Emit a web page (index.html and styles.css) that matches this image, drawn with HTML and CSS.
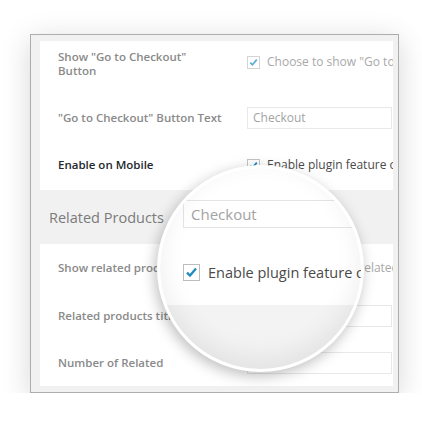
FILE: index.html
```html
<!DOCTYPE html>
<html lang="en">
<head>
<meta charset="utf-8">
<title>Settings</title>
<link rel="stylesheet" href="styles.css">
</head>
<body>
<div class="frame">
  <div class="panel">
    <section class="card card1">
      <div class="row r1">
        <div class="label">Show "Go to Checkout"<br>Button</div>
        <div class="field">
          <svg class="cb" width="13" height="13" viewBox="0 0 13 13"><rect x="0.5" y="0.5" width="12" height="12" fill="#fff" stroke="#d4d4d4"/><path d="M3.2 6.6 L5.4 8.8 L9.8 3.6" fill="none" stroke="#5aaed6" stroke-width="1.7"/></svg>
          <span class="ftext muted">Choose to show "Go to Checkout" button</span>
        </div>
      </div>
      <div class="row r2">
        <div class="label">"Go to Checkout" Button Text</div>
        <div class="field"><div class="input">Checkout</div></div>
      </div>
      <div class="row r3">
        <div class="label dark">Enable on Mobile</div>
        <div class="field">
          <svg class="cb" width="13" height="13" viewBox="0 0 13 13"><rect x="0.5" y="0.5" width="12" height="12" fill="#fff" stroke="#c4c4c4"/><path d="M3.2 6.6 L5.4 8.8 L9.8 3.6" fill="none" stroke="#1e8cbe" stroke-width="1.8"/></svg>
          <span class="ftext dark">Enable plugin feature on mobile</span>
        </div>
      </div>
    </section>
    <div class="heading">Related Products</div>
    <section class="card card2">
      <div class="row s1">
        <div class="label">Show related products</div>
        <div class="field">
          <svg class="cb" width="13" height="13" viewBox="0 0 13 13"><rect x="0.5" y="0.5" width="12" height="12" fill="#fff" stroke="#d4d4d4"/></svg>
          <span class="ftext muted">Choose to show related</span>
        </div>
      </div>
      <div class="row s2">
        <div class="label">Related products title</div>
        <div class="field"><div class="input"></div></div>
      </div>
      <div class="row s3">
        <div class="label">Number of Related</div>
        <div class="field"><div class="input"></div></div>
      </div>
    </section>
  </div>
  <div class="lens">
    <div class="lens-view">
      <div class="lens-input">Checkout</div>
      <div class="lens-check">
        <svg width="17" height="17" viewBox="0 0 17 17"><rect x="0.5" y="0.5" width="16" height="16" fill="#fff" stroke="#bdbdbd"/><path d="M4 8.6 L7 11.6 L13 4.6" fill="none" stroke="#1e8cbe" stroke-width="2.3"/></svg>
        <span class="lens-text">Enable plugin feature on mobile</span>
      </div>
      <div class="lens-band"></div>
    </div>
  </div>
</div>
</body>
</html>
```
FILE: styles.css
```css
html, body {
  margin: 0;
  background: #ffffff;
}
body {
  font-family: "Open Sans", "Liberation Sans", sans-serif;
}
.frame {
  position: relative;
  margin: 34px 0 0 30px;
  width: 353px;
  padding: 6px 5px 6px 9px;
  border: 1px solid #adadad;
  background: #f1f1f1;
  box-shadow: 0 6px 28px rgba(0, 0, 0, 0.16);
}
.panel {
  overflow: hidden;
}
.card {
  background: #ffffff;
}
.card1 {
  padding-bottom: 8px;
}
.row {
  display: grid;
  grid-template-columns: 189px 146px;
  padding-left: 18px;
  align-items: center;
}
.r1 { height: 46px; }
.r2 { height: 61px; }
.r3 { height: 34px; }
.s1, .s2 { height: 48px; }
.s3 { height: 46px; }
.r1 .field { margin-bottom: 4px; }
.label {
  font-size: 11.5px;
  font-weight: 600;
  line-height: 14px;
  color: #8a8a8a;
}
.label.dark {
  color: #23282d;
}
.field {
  display: flex;
  align-items: center;
  gap: 7px;
  white-space: nowrap;
  overflow: hidden;
}
.cb {
  flex-shrink: 0;
  display: block;
}
.ftext {
  flex-shrink: 0;
  font-size: 12px;
  line-height: 16px;
}
.ftext.muted { color: #a9a9a9; }
.ftext.dark { color: #4a4a4a; }
.input {
  flex-shrink: 0;
  box-sizing: border-box;
  width: 145px;
  height: 22px;
  padding-left: 5px;
  border: 1px solid #e8e8e8;
  background: #ffffff;
  font-size: 12px;
  line-height: 20px;
  color: #a3a3a3;
}
.heading {
  height: 54px;
  display: flex;
  align-items: center;
  padding-left: 9px;
  font-size: 14.5px;
  color: #7b7b7b;
}
.lens {
  position: absolute;
  left: 126px;
  top: 130px;
  width: 201px;
  height: 201px;
  border: 3px solid #ffffff;
  border-radius: 50%;
  overflow: hidden;
  background: #ffffff;
  box-shadow: -2px 4px 14px rgba(0, 0, 0, 0.26);
}
.lens::after {
  content: "";
  position: absolute;
  inset: 0;
  border-radius: 50%;
  box-shadow: inset 0 -10px 26px rgba(0, 0, 0, 0.07);
}
.lens-view {
  width: 204px;
  height: 100%;
  overflow: hidden;
  padding-top: 32px;
  box-sizing: border-box;
}
.lens-input {
  box-sizing: border-box;
  margin-left: 23px;
  width: 250px;
  height: 28px;
  padding-left: 7px;
  border: 1px solid #e4e4e4;
  background: #ffffff;
  font-size: 15px;
  line-height: 26px;
  color: #a3a3a3;
}
.lens-check {
  display: flex;
  align-items: center;
  gap: 8px;
  margin: 36px 0 0 23px;
  height: 17px;
  white-space: nowrap;
}
.lens-check svg {
  display: block;
  flex-shrink: 0;
}
.lens-text {
  flex-shrink: 0;
  font-size: 14.5px;
  color: #4a4a4a;
}
.lens-band {
  margin-top: 24px;
  height: 100px;
  background: #f3f3f3;
}
```
